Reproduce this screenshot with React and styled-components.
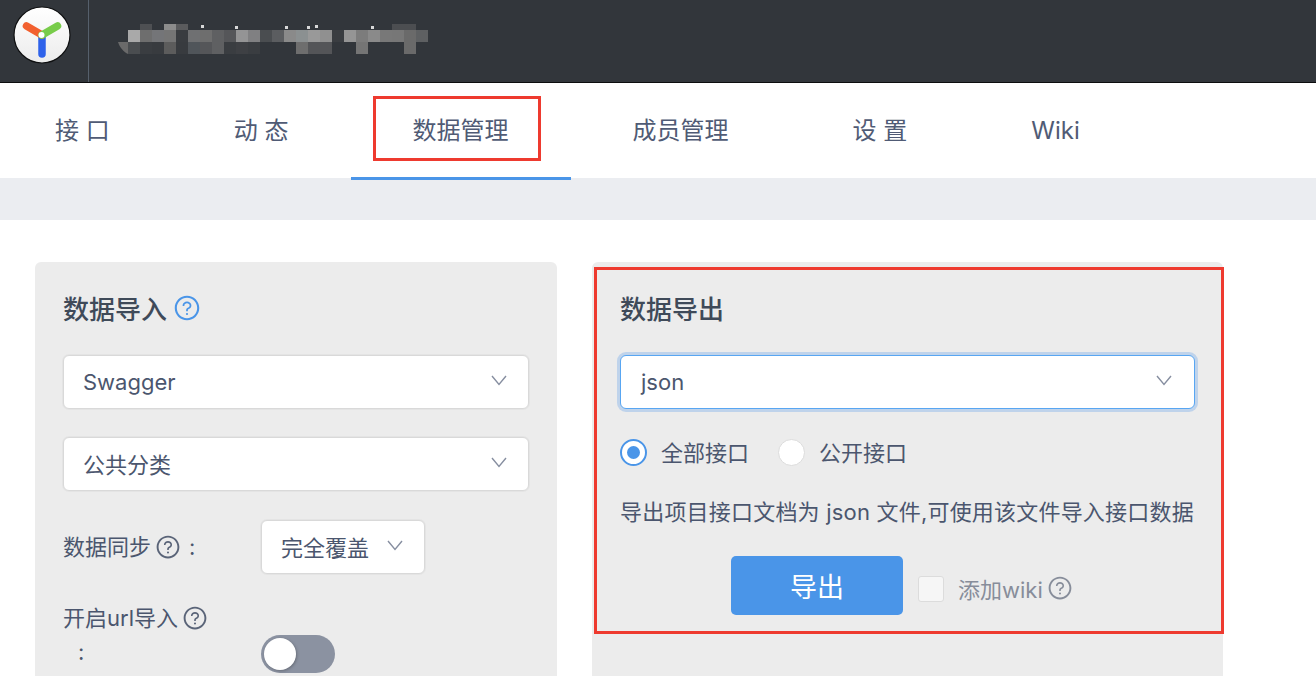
import React from "react";
import styled, { createGlobalStyle } from "styled-components";
import { AiOutlineQuestionCircle } from "react-icons/ai";

const GlobalStyle = createGlobalStyle`
  html, body {
    margin: 0;
    padding: 0;
    background: #fff;
  }
  body {
    font-family: Inter, "Noto Sans CJK SC", sans-serif;
    color: #4b566e;
  }
`;

const Page = styled.div`
  width: 1316px;
  height: 676px;
  overflow: hidden;
`;

const Header = styled.header`
  height: 82px;
  display: flex;
  background: #32363b;
  border-bottom: 1px solid #0c0d0e;
`;

const LogoCell = styled.div`
  width: 89px;
  box-sizing: border-box;
  padding: 6px 0 0 13px;
  border-right: 1px solid #56606c;
`;

const Logo = styled.svg`
  display: block;
  width: 58px;
  height: 58px;
`;

const Mosaic = styled.svg`
  display: block;
  margin-left: 28px;
  width: 320px;
  height: 82px;
`;

const Tabs = styled.nav`
  display: flex;
  height: 95px;
  background: #fff;
`;

const Tab = styled.div`
  position: relative;
  box-sizing: border-box;
  height: 97px;
  padding: 0 62px;
  padding-left: ${(p) => (p.$first ? "55px" : "62px")};
  font-size: 24px;
  line-height: 96px;
  color: #505b75;
  white-space: pre;
  border-bottom: 3px solid ${(p) => (p.$active ? "#4a95e8" : "transparent")};
`;

const TabMark = styled.span`
  position: absolute;
  left: 22px;
  top: 13px;
  width: 168px;
  height: 65px;
  box-sizing: border-box;
  border: 3px solid #ee3a2f;
`;

const Band = styled.div`
  height: 42px;
  background: #ebedf1;
`;

const Panels = styled.main`
  display: flex;
  gap: 35px;
  padding: 42px 0 0 35px;
`;

const Panel = styled.section`
  position: relative;
  box-sizing: border-box;
  width: ${(p) => p.$width}px;
  height: 460px;
  padding: 30px 28px 0;
  background: #ececec;
  border-radius: 6px;
`;

const PanelMark = styled.span`
  position: absolute;
  left: 2px;
  top: 5px;
  width: 630px;
  height: 367px;
  box-sizing: border-box;
  border: 3px solid #ee3a2f;
  pointer-events: none;
`;

const Title = styled.h2`
  display: flex;
  align-items: center;
  gap: 6px;
  box-sizing: border-box;
  margin: 0 0 29px;
  height: 34px;
  padding-bottom: 3px;
  font-size: 26px;
  font-weight: 500;
  color: #3f4a59;
`;

const HelpIcon = styled(AiOutlineQuestionCircle)`
  flex: none;
  font-size: ${(p) => p.$size || 26}px;
  color: ${(p) => p.$color || "#5a6478"};
`;

const Select = styled.div`
  display: flex;
  align-items: center;
  justify-content: space-between;
  box-sizing: border-box;
  width: ${(p) => (p.$width ? `${p.$width}px` : "100%")};
  height: 54px;
  margin-bottom: ${(p) => p.$gap ?? 28}px;
  padding: 0 ${(p) => (p.$focus ? "22px 0 20px" : "21px 0 19px")};
  font-size: 22px;
  color: #4b566e;
  background: #fff;
  border: 1px solid ${(p) => (p.$focus ? "#58a6f2" : "#d9d9d9")};
  border-radius: 6px;
  box-shadow: 0 0 0 ${(p) => (p.$focus ? "3px rgba(74,149,232,0.28)" : "1px rgba(0,0,0,0.03)")};
`;

const CjkText = styled.span`
  padding-bottom: 3px;
`;

const Chevron = styled.svg`
  flex: none;
  width: 16px;
  height: 11px;
  margin-top: -3px;
  fill: none;
  stroke: #868ea0;
  stroke-width: 1.4;
`;

const FormRow = styled.div`
  display: grid;
  grid-template-columns: 198px auto;
  align-items: ${(p) => (p.$top ? "start" : "center")};
  margin-bottom: ${(p) => p.$gap || 0}px;
`;

const FieldLabel = styled.label`
  display: flex;
  align-items: center;
  flex-wrap: wrap;
  gap: 0 4px;
  font-size: 22px;
  line-height: 34px;
  color: #4b566e;
`;

const Colon = styled.span`
  box-sizing: border-box;
  width: ${(p) => (p.$indent ? "100%" : "auto")};
  padding-left: ${(p) => (p.$indent ? `${p.$indent}px` : "4px")};
`;

const Toggle = styled.div`
  width: 74px;
  height: 38px;
  margin-top: 34px;
  box-sizing: border-box;
  padding: 3px;
  background: #8b92a1;
  border-radius: 19px;
`;

const Knob = styled.div`
  width: 32px;
  height: 32px;
  background: #fff;
  border-radius: 50%;
  box-shadow: 1px 1px 3px rgba(0, 0, 0, 0.25);
`;

const RadioGroup = styled.div`
  display: flex;
  align-items: center;
  height: 28px;
  margin-top: 29px;
`;

const RadioItem = styled.label`
  display: flex;
  align-items: center;
  gap: 14px;
  margin-right: 29px;
  font-size: 22px;
  color: #4b566e;
`;

const RadioDot = styled.span`
  display: flex;
  align-items: center;
  justify-content: center;
  width: 27px;
  height: 27px;
  box-sizing: border-box;
  background: #fff;
  border: ${(p) => (p.$on ? "2px solid #4a95e8" : "1px solid #dcdcdc")};
  border-radius: 50%;

  &::after {
    content: "";
    display: ${(p) => (p.$on ? "block" : "none")};
    width: 13px;
    height: 13px;
    background: #4a95e8;
    border-radius: 50%;
  }
`;

const Description = styled.p`
  margin: 30px 0 28px;
  font-size: 22px;
  line-height: 32px;
  letter-spacing: 0.2px;
  white-space: nowrap;
  color: #4b566e;
`;

const ExportRow = styled.div`
  display: flex;
  align-items: center;
  padding-left: 111px;
`;

const ExportButton = styled.button`
  width: 172px;
  height: 59px;
  padding: 0;
  margin-right: 15px;
  font-family: inherit;
  font-size: 27px;
  color: #fff;
  background: #4a95e8;
  border: 0;
  border-radius: 5px;
`;

const CheckBox = styled.span`
  width: 26px;
  height: 26px;
  margin: 7px 0 0;
  box-sizing: border-box;
  background: #f6f6f6;
  border: 1px solid #dcdcdc;
  border-radius: 3px;
`;

const WikiLabel = styled.span`
  display: flex;
  align-items: center;
  gap: 4px;
  margin: 5px 0 0 14px;
  font-size: 22px;
  color: #878d9a;
`;

// blurred project name, each row of the mosaic is [x, colour] at 12px per cell
const MOSAIC = [
  { y: 24, h: 6, cells: [[140, "#4e5053"], [164, "#8c8c8c"], [176, "#5a5b5d"], [392, "#4c4e51"], [404, "#4c4e51"]] },
  {
    y: 30,
    h: 12,
    cells: [
      [128, "#a9a9a9"], [140, "#6e6e6e"], [152, "#747578"], [164, "#757575"], [176, "#393c40"],
      [188, "#6f7072"], [200, "#6e6e6e"], [212, "#5f6062"], [224, "#555659"], [236, "#949495"],
      [248, "#808082"], [260, "#4a4d50"], [272, "#5b5d60"], [284, "#8a8a8a"], [296, "#8b9091"],
      [308, "#999999"], [320, "#909090"], [332, "#3a3d41"], [344, "#959595"], [356, "#7c7c7c"],
      [368, "#8a8a8a"], [380, "#787878"], [392, "#777777"], [404, "#6a6a6a"], [416, "#5e6062"],
    ],
  },
  {
    y: 42,
    h: 12,
    cells: [
      [128, "#4a4d50"], [140, "#3a3d41"], [152, "#383b3f"], [164, "#5c5c5c"], [176, "#383b3f"],
      [188, "#50555a"], [200, "#555659"], [212, "#5f6062"], [224, "#3a3d41"], [236, "#3e4044"],
      [248, "#3a3d41"], [296, "#6e6e6e"], [308, "#545558"], [320, "#545558"], [356, "#757575"], [404, "#6a6a6a"],
    ],
  },
];

const SPECKS = [[201, 25, 3], [235, 26, 3], [285, 26, 3], [307, 26, 3], [315, 25, 3], [371, 26, 3]];

function ChevronDown() {
  return (
    <Chevron viewBox="0 0 16 11">
      <polyline points="1,1 8,9.5 15,1" />
    </Chevron>
  );
}

export default function App() {
  return (
    <Page>
      <GlobalStyle />
      <Header>
        <LogoCell>
          <Logo viewBox="-1 -1 58 58">
            <defs>
              <linearGradient id="logoFill" x1="0" y1="0" x2="0" y2="1">
                <stop offset="0" stopColor="#ffffff" />
                <stop offset="1" stopColor="#ececec" />
              </linearGradient>
            </defs>
            <circle cx="28" cy="28" r="28" fill="url(#logoFill)" stroke="#0f1011" strokeWidth="1.2" />
            <line x1="28" y1="28" x2="28" y2="47" stroke="#2e62ea" strokeWidth="7.5" strokeLinecap="round" />
            <line x1="28" y1="28" x2="12.5" y2="19" stroke="#f2602f" strokeWidth="7.5" strokeLinecap="round" />
            <line x1="28" y1="28" x2="43.5" y2="19" stroke="#78cc4a" strokeWidth="7.5" strokeLinecap="round" />
            <circle cx="27.5" cy="28" r="3" fill="#fff" />
          </Logo>
        </LogoCell>
        <Mosaic viewBox="117 0 320 82">
          <path d="M118 42c2 6 6 10 10 12V42z" fill="#6a6a6a" />
          {MOSAIC.map((row) =>
            row.cells.map(([x, color]) => (
              <rect key={`${row.y}-${x}`} x={x} y={row.y} width="12" height={row.h} fill={color} />
            ))
          )}
          {SPECKS.map(([x, y, w]) => (
            <rect key={x} x={x} y={y} width={w} height="3" fill="#d8d8d8" />
          ))}
        </Mosaic>
      </Header>
      <Tabs>
        <Tab $first>接 口</Tab>
        <Tab>动 态</Tab>
        <Tab $active>
          数据管理
          <TabMark />
        </Tab>
        <Tab>成员管理</Tab>
        <Tab>设 置</Tab>
        <Tab>Wiki</Tab>
      </Tabs>
      <Band />
      <Panels>
        <Panel $width={522}>
          <Title>
            数据导入
            <HelpIcon $size={28} $color="#4a95e8" />
          </Title>
          <Select>
            Swagger
            <ChevronDown />
          </Select>
          <Select $gap={29}>
            <CjkText>公共分类</CjkText>
            <ChevronDown />
          </Select>
          <FormRow $gap={27}>
            <FieldLabel>
              数据同步
              <HelpIcon />
              <Colon>:</Colon>
            </FieldLabel>
            <Select $width={164} $gap={0}>
              <CjkText>完全覆盖</CjkText>
              <ChevronDown />
            </Select>
          </FormRow>
          <FormRow $top>
            <FieldLabel>
              开启url导入
              <HelpIcon />
              <Colon $indent={15}>:</Colon>
            </FieldLabel>
            <Toggle>
              <Knob />
            </Toggle>
          </FormRow>
        </Panel>
        <Panel $width={631}>
          <PanelMark />
          <Title>数据导出</Title>
          <Select $focus $gap={0}>
            json
            <ChevronDown />
          </Select>
          <RadioGroup>
            <RadioItem>
              <RadioDot $on />
              <CjkText>全部接口</CjkText>
            </RadioItem>
            <RadioItem>
              <RadioDot />
              <CjkText>公开接口</CjkText>
            </RadioItem>
          </RadioGroup>
          <Description>导出项目接口文档为 json 文件,可使用该文件导入接口数据</Description>
          <ExportRow>
            <ExportButton>导出</ExportButton>
            <CheckBox />
            <WikiLabel>
              添加wiki
              <HelpIcon $color="#878d9a" />
            </WikiLabel>
          </ExportRow>
        </Panel>
      </Panels>
    </Page>
  );
}
